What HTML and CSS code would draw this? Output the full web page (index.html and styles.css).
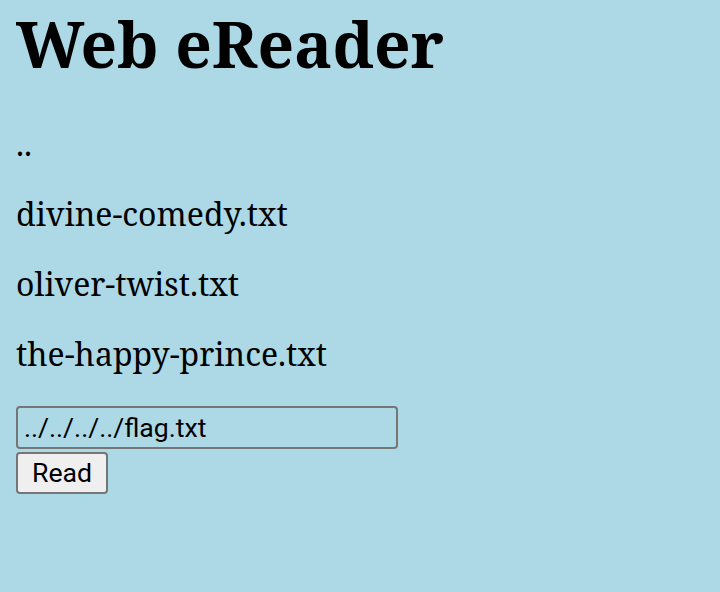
FILE: index.html
```html
<!DOCTYPE html>
<html>
<head>
<meta charset="utf-8">
<title>Web eReader</title>
<link rel="stylesheet" href="styles.css">
</head>
<body>
<h1 class="title">Web eReader</h1>
<div class="files">
  <p class="file">..</p>
  <p class="file">divine-comedy.txt</p>
  <p class="file">oliver-twist.txt</p>
  <p class="file">the-happy-prince.txt</p>
</div>
<form class="reader">
  <input class="path" type="text" value="../../../../flag.txt">
  <button class="read" type="button">Read</button>
</form>
</body>
</html>
```
FILE: styles.css
```css
html { background: #add8e6; }
body {
  margin: 16px;
  font-family: "Noto Serif", "DejaVu Serif", serif;
  font-size: 32px;
  color: #000;
}
.title {
  margin: 2px 0 0 0;
  font-size: 64px;
  line-height: 52px;
  font-weight: bold;
}
.files { margin-top: 39px; }
.file {
  margin: 0;
  line-height: 70px;
}
.reader {
  margin: 17px 0 0 0;
  display: flex;
  flex-direction: column;
  align-items: flex-start;
  gap: 3px;
}
.path {
  box-sizing: border-box;
  width: 382px;
  height: 43px;
  margin: 0;
  padding: 2px 6px;
  font-family: Roboto, "Noto Sans", sans-serif;
  font-size: 26.67px;
  color: #000;
  background: #add8e6;
  border: 2px solid #767676;
  border-radius: 4px;
}
.read {
  box-sizing: border-box;
  width: 92px;
  height: 42px;
  margin: 0;
  padding: 2px 12px;
  font-family: Roboto, "Noto Sans", sans-serif;
  font-size: 26.67px;
  color: #000;
  background: #efefef;
  border: 2px solid #767676;
  border-radius: 4px;
}
```
